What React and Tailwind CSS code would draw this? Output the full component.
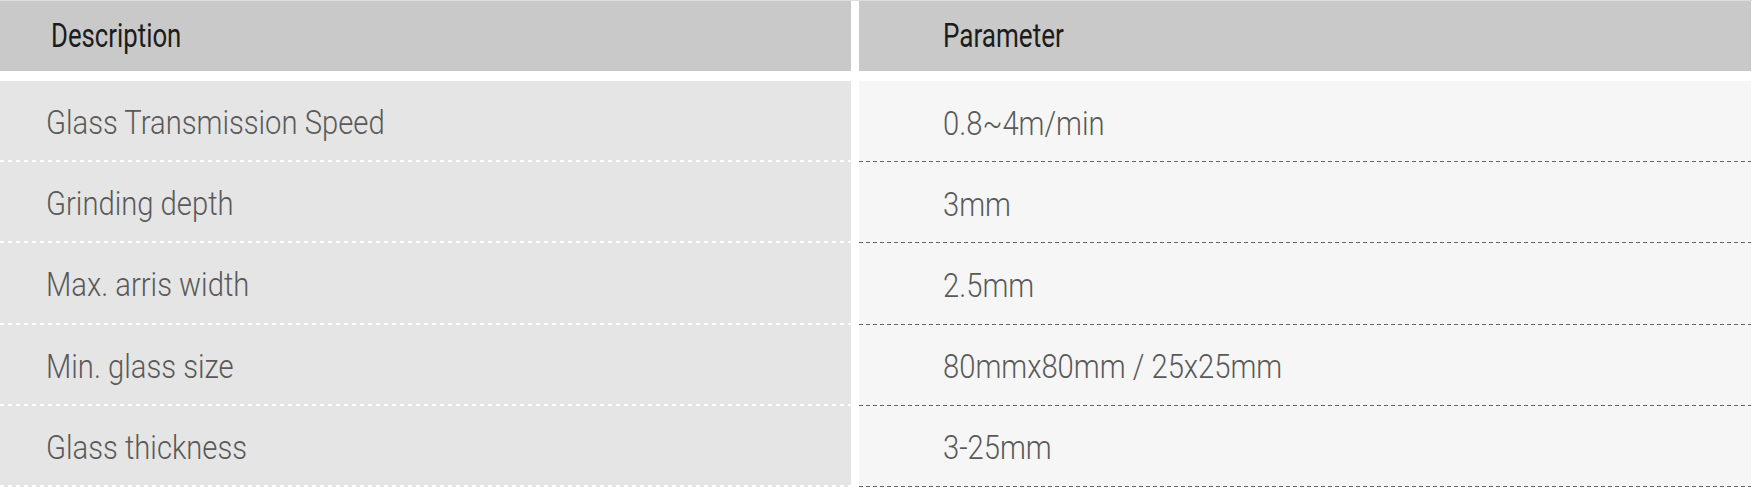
import React from 'react'

const rows = [
  { name: 'Glass Transmission Speed', value: '0.8~4m/min' },
  { name: 'Grinding depth', value: '3mm' },
  { name: 'Max. arris width', value: '2.5mm' },
  { name: 'Min. glass size', value: '80mmx80mm / 25x25mm' },
  { name: 'Glass thickness', value: '3-25mm' },
]

const App = () => {
  return (
    <div className="w-[1752px] h-[488px] bg-white overflow-hidden font-['Roboto',sans-serif]">
      {/* Header */}
      <div className="grid grid-cols-[851px_892px] gap-x-[8px] border-t border-[#dedede]">
        <div className="h-[70px] bg-[#c9c9c9] flex items-center pl-[51px] pb-[2px]">
          <span className="inline-block origin-left scale-x-[0.78] text-[33px] text-[#1c1c1c] leading-none whitespace-nowrap">
            Description
          </span>
        </div>
        <div className="h-[70px] bg-[#c9c9c9] flex items-center pl-[84px] pb-[2px]">
          <span className="inline-block origin-left scale-x-[0.79] text-[33px] text-[#1c1c1c] leading-none whitespace-nowrap">
            Parameter
          </span>
        </div>
      </div>

      {/* Rows */}
      <div className="mt-[10px] grid grid-cols-[851px_892px] gap-x-[8px]">
        {rows.map((row, i) => (
          <React.Fragment key={i}>
            <div className="h-[81.2px] bg-[#e5e5e5] flex flex-col">
              <div className="flex-1 flex items-center pl-[46px] pt-[4px]">
                <span className="inline-block origin-left scale-x-[0.885] text-[33px] font-light text-[#595959] leading-none whitespace-nowrap">
                  {row.name}
                </span>
              </div>
              <div className="h-[2px] bg-[repeating-linear-gradient(90deg,#ffffff_0px,#ffffff_4px,transparent_4px,transparent_8px)]" />
            </div>
            <div className="h-[81.2px] bg-[#f6f6f6] flex flex-col">
              <div className="flex-1 flex items-center pl-[84px] pt-[4px]">
                <span className="inline-block origin-left scale-x-[0.885] text-[33px] font-light text-[#595959] leading-none whitespace-nowrap">
                  {row.value}
                </span>
              </div>
              <div className="h-[1px] bg-[repeating-linear-gradient(90deg,#666666_0px,#666666_4px,transparent_4px,transparent_7px)]" />
            </div>
          </React.Fragment>
        ))}
      </div>
    </div>
  )
}

export default App
